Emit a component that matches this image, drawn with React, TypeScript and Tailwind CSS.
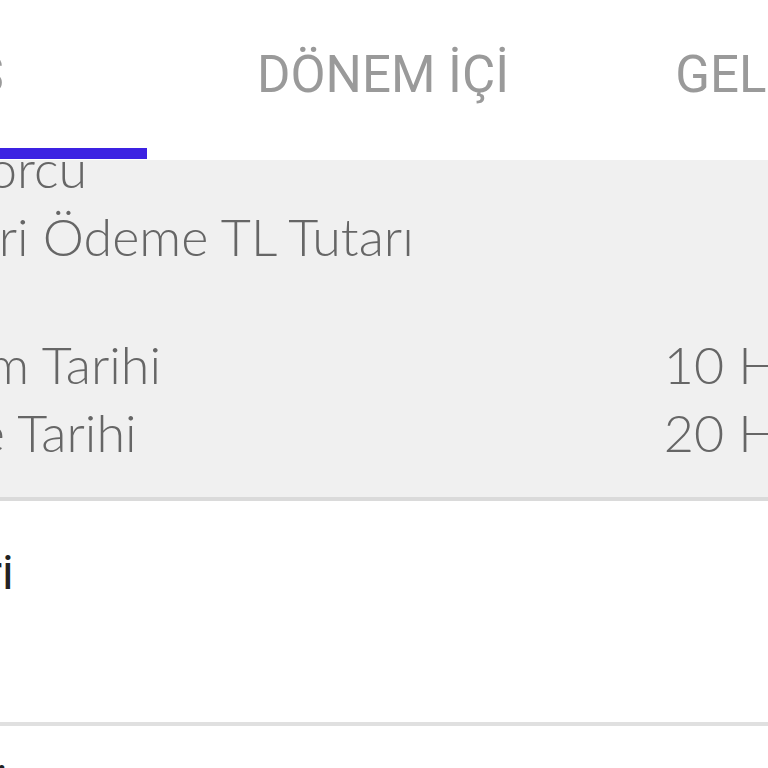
const tabs = ["GEÇMİŞ", "DÖNEM İÇİ", "GELECEK DÖNEM"];

const rows = [
  { label: "Gecikmiş Borcu", value: "" },
  { label: "Ekstre Asgari Ödeme TL Tutarı", value: "" },
];

const dates = [
  { label: "Hesap Kesim Tarihi", value: "10 Haziran" },
  { label: "Son Ödeme Tarihi", value: "20 Haziran" },
];

const Row = ({ label, value }: { label: string; value: string }) => (
  <div className="flex h-[68px] items-center justify-between leading-[68px] whitespace-nowrap">
    <span>{label}</span>
    <span>{value}</span>
  </div>
);

export default function App() {
  return (
    <div className="w-[768px] h-[768px] overflow-hidden bg-white">
      <div className="flex w-max h-[160px] -ml-[325px] font-['Roboto',sans-serif]">
        {tabs.map((t, i) => (
          <div key={t} className="w-[472px] flex flex-col">
            <div
              className={
                i === 2
                  ? "h-[148px] flex items-center justify-center pl-[46px] text-[51px] leading-none text-[#9a9a9a] whitespace-nowrap"
                  : "h-[148px] flex items-center justify-center text-[51px] leading-none text-[#9a9a9a] whitespace-nowrap"
              }
            >
              {t}
            </div>
            <div className={i === 0 ? "h-[11px] bg-[#3c22e2]" : "h-[11px]"} />
          </div>
        ))}
      </div>

      <div className="h-[341px] overflow-hidden bg-[#f0f0f0] border-b-[4px] border-[#dadada]">
        <div className="w-[1168px] -mt-[26px] -ml-[260px] font-['Lato',sans-serif] font-light text-[52px] text-[#666666]">
          {rows.map((r) => (
            <Row key={r.label} {...r} />
          ))}
          <div className="mt-[60px]">
            {dates.map((r) => (
              <Row key={r.label} {...r} />
            ))}
          </div>
        </div>
      </div>

      <div className="h-[225px] border-b-[4px] border-[#e0e0e0] overflow-hidden">
        <div className="-ml-[218px] pt-[40px] font-['Roboto',sans-serif] text-[48px] leading-[64px] text-[#222222] whitespace-nowrap">
          Hareketleri
        </div>
      </div>

      <div className="-ml-[20px] pt-[34px] font-['Roboto',sans-serif] text-[48px] leading-[64px] text-[#222222] whitespace-nowrap">
        Ödeme Seçenekleri
      </div>
    </div>
  );
}
